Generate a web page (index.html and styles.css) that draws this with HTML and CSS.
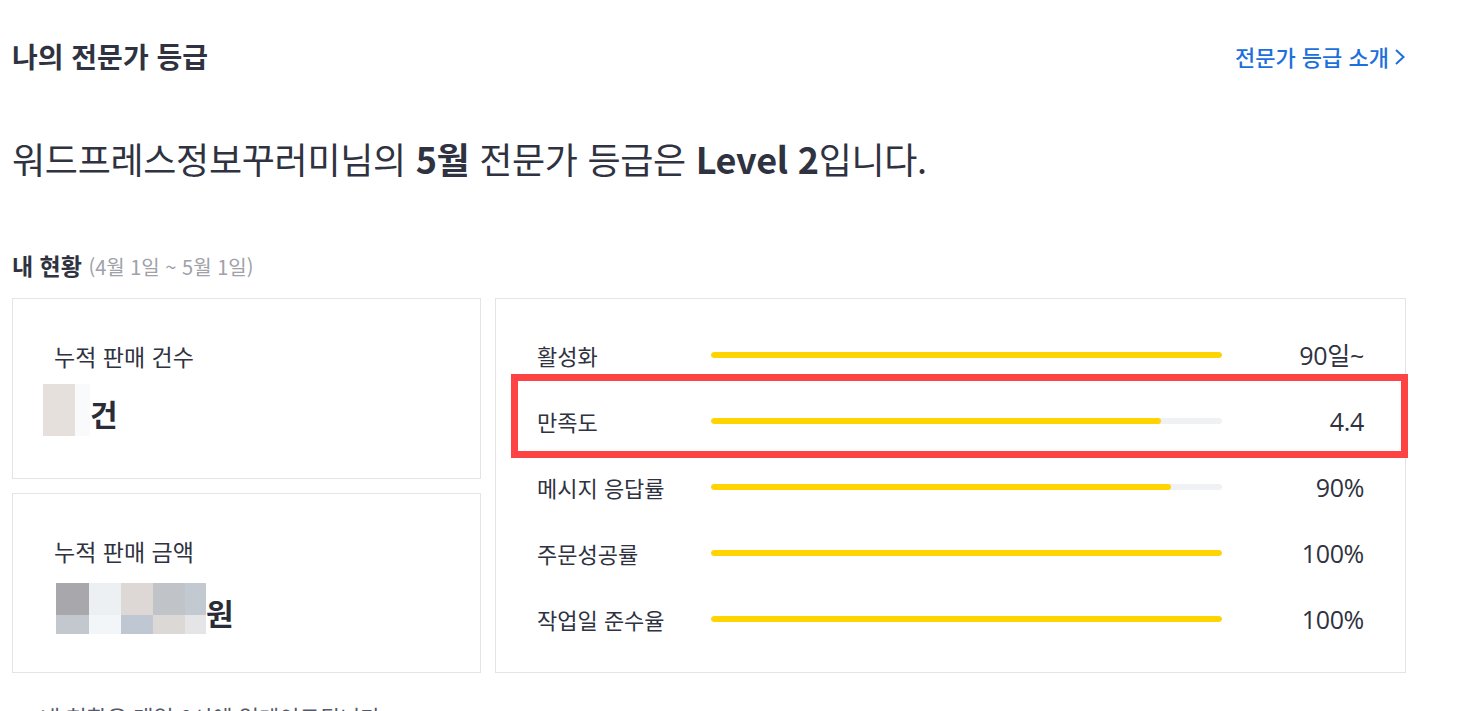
FILE: index.html
```html
<!DOCTYPE html>
<html lang="ko">
<head>
<meta charset="utf-8">
<title>나의 전문가 등급</title>
<link rel="stylesheet" href="styles.css">
</head>
<body>
<div class="page">
  <header class="head">
    <h1 class="title">나의 전문가 등급</h1>
    <a class="intro-link" href="#">전문가 등급 소개
      <svg class="chev" width="12" height="18" viewBox="0 0 12 18"><path d="M2 2 L9.5 9 L2 16" fill="none" stroke="currentColor" stroke-width="2"/></svg>
    </a>
  </header>

  <p class="summary">워드프레스정보꾸러미님의 <b>5월</b> 전문가 등급은 <b>Level 2</b>입니다.</p>

  <h2 class="status-title">내 현황 <span class="period">(4월 1일 ~ 5월 1일)</span></h2>

  <div class="status">
    <div class="left-col">
      <div class="card stat">
        <div class="stat-label">누적 판매 건수</div>
        <div class="stat-value">
          <span class="mosaic mosaic-count"><i class="c1"></i><i class="c2"></i></span>
          <span class="unit">건</span>
        </div>
      </div>
      <div class="card stat">
        <div class="stat-label">누적 판매 금액</div>
        <div class="stat-value">
          <span class="mosaic mosaic-amount">
            <i class="a1"></i><i class="a2"></i><i class="a3"></i><i class="a4"></i><i class="a5"></i>
            <i class="b1"></i><i class="b2"></i><i class="b3"></i><i class="b4"></i><i class="b5"></i>
          </span>
          <span class="unit">원</span>
        </div>
      </div>
    </div>

    <div class="card metrics">
      <div class="row">
        <span class="label">활성화</span>
        <span class="track"><span class="fill" style="width:100%"></span></span>
        <span class="value">90일~</span>
      </div>
      <div class="row">
        <span class="label">만족도</span>
        <span class="track"><span class="fill" style="width:88%"></span></span>
        <span class="value">4.4</span>
      </div>
      <div class="row">
        <span class="label">메시지 응답률</span>
        <span class="track"><span class="fill" style="width:90%"></span></span>
        <span class="value">90%</span>
      </div>
      <div class="row">
        <span class="label">주문성공률</span>
        <span class="track"><span class="fill" style="width:100%"></span></span>
        <span class="value">100%</span>
      </div>
      <div class="row">
        <span class="label">작업일 준수율</span>
        <span class="track"><span class="fill" style="width:100%"></span></span>
        <span class="value">100%</span>
      </div>
      <div class="highlight"></div>
    </div>
  </div>

  <p class="note">내 현황은 매일 0시에 업데이트됩니다.</p>
</div>
</body>
</html>
```

FILE: styles.css
```css
* { box-sizing: border-box; }

html, body {
  margin: 0;
  background: #fff;
}

body {
  font-family: "Noto Sans CJK KR", "Noto Sans", sans-serif;
  color: #2f3240;
  overflow: hidden;
}

.page {
  width: 1406px;
  padding: 39px 0 0 12px;
}

.head {
  display: flex;
  justify-content: space-between;
  align-items: center;
  height: 34px;
}

.title {
  margin: 0;
  font-size: 28px;
  line-height: 34px;
  font-weight: 700;
  letter-spacing: 0;
  color: #2f3240;
}

.intro-link {
  display: flex;
  align-items: center;
  gap: 5px;
  font-size: 22px;
  line-height: 34px;
  font-weight: 500;
  color: #1c6fdc;
  text-decoration: none;
  letter-spacing: 0;
}

.chev { display: block; margin-top: 1px; }

.summary {
  margin: 63px 0 0;
  height: 44px;
  font-size: 36px;
  line-height: 44px;
  font-weight: 400;
  letter-spacing: -0.3px;
  color: #2f3240;
}

.summary b { font-weight: 700; }

.status-title {
  margin: 71px 0 0;
  height: 28px;
  font-size: 23px;
  line-height: 28px;
  font-weight: 700;
  letter-spacing: 0;
  color: #2f3240;
}

.period {
  font-size: 20px;
  line-height: 20px;
  font-weight: 400;
  color: #a0a1a9;
  letter-spacing: 0;
}

.status {
  margin-top: 19px;
  display: grid;
  grid-template-columns: 469px 911px;
  gap: 14px;
  height: 375px;
}

.left-col {
  display: grid;
  grid-template-rows: 181px 180px;
  gap: 14px;
}

.card {
  border: 1px solid #e3e4e8;
  background: #fff;
}

.stat {
  padding: 43px 0 0 41px;
}

.stat-label {
  font-size: 23px;
  line-height: 28px;
  color: #2f3240;
  letter-spacing: 0;
}

.stat-value {
  display: flex;
  align-items: center;
  margin-top: 14px;
  height: 52px;
}

.unit {
  font-size: 30px;
  font-weight: 700;
  line-height: 52px;
  color: #2a2c38;
  padding-top: 6px;
}

.mosaic i { display: block; }

.mosaic-count {
  display: flex;
  margin-left: -11px;
  height: 52px;
}
.mosaic-count .c1 { width: 32px; height: 52px; background: #e6e0dd; }
.mosaic-count .c2 { width: 15px; height: 52px; background: #f9fafc; }

.left-col .card:nth-child(2) .stat-value { margin-top: 18px; height: 51px; }

.mosaic-amount {
  display: grid;
  grid-template-columns: 33px 32px 32px 32px 21px;
  grid-template-rows: 32px 19px;
  margin-left: 2px;
}
.a1 { background: #a8a8ac; }
.a2 { background: #edf0f3; }
.a3 { background: #ddd8d6; }
.a4 { background: #c0c3c8; }
.a5 { background: #c3c9d0; }
.b1 { background: #c3c8cf; }
.b2 { background: #f3f6f9; }
.b3 { background: #bfc7d3; }
.b4 { background: #dcd8d6; }
.b5 { background: #e5e5e7; }

.metrics {
  position: relative;
  padding: 23px 41px 20px 41px;
  display: flex;
  flex-direction: column;
}

.row {
  display: grid;
  grid-template-columns: 174px 511px 1fr;
  align-items: center;
  height: 66px;
}

.label {
  font-size: 22px;
  line-height: 28px;
  color: #2f3240;
  letter-spacing: 0;
}

.track {
  display: block;
  height: 6px;
  border-radius: 3px;
  background: #f0f1f4;
  overflow: hidden;
}

.fill {
  display: block;
  height: 100%;
  border-radius: 3px;
  background: #ffd400;
}

.value {
  text-align: right;
  font-family: "Open Sans", "Noto Sans CJK KR", sans-serif;
  font-size: 25px;
  line-height: 28px;
  color: #2f3240;
  letter-spacing: -0.3px;
}

.highlight {
  position: absolute;
  left: 15px;
  top: 75px;
  width: 897px;
  height: 84px;
  border: 7px solid #fd4343;
  pointer-events: none;
}

.note {
  margin: 29px 0 0 28px;
  font-size: 22px;
  line-height: 28px;
  color: #555866;
  letter-spacing: 0;
}
```
